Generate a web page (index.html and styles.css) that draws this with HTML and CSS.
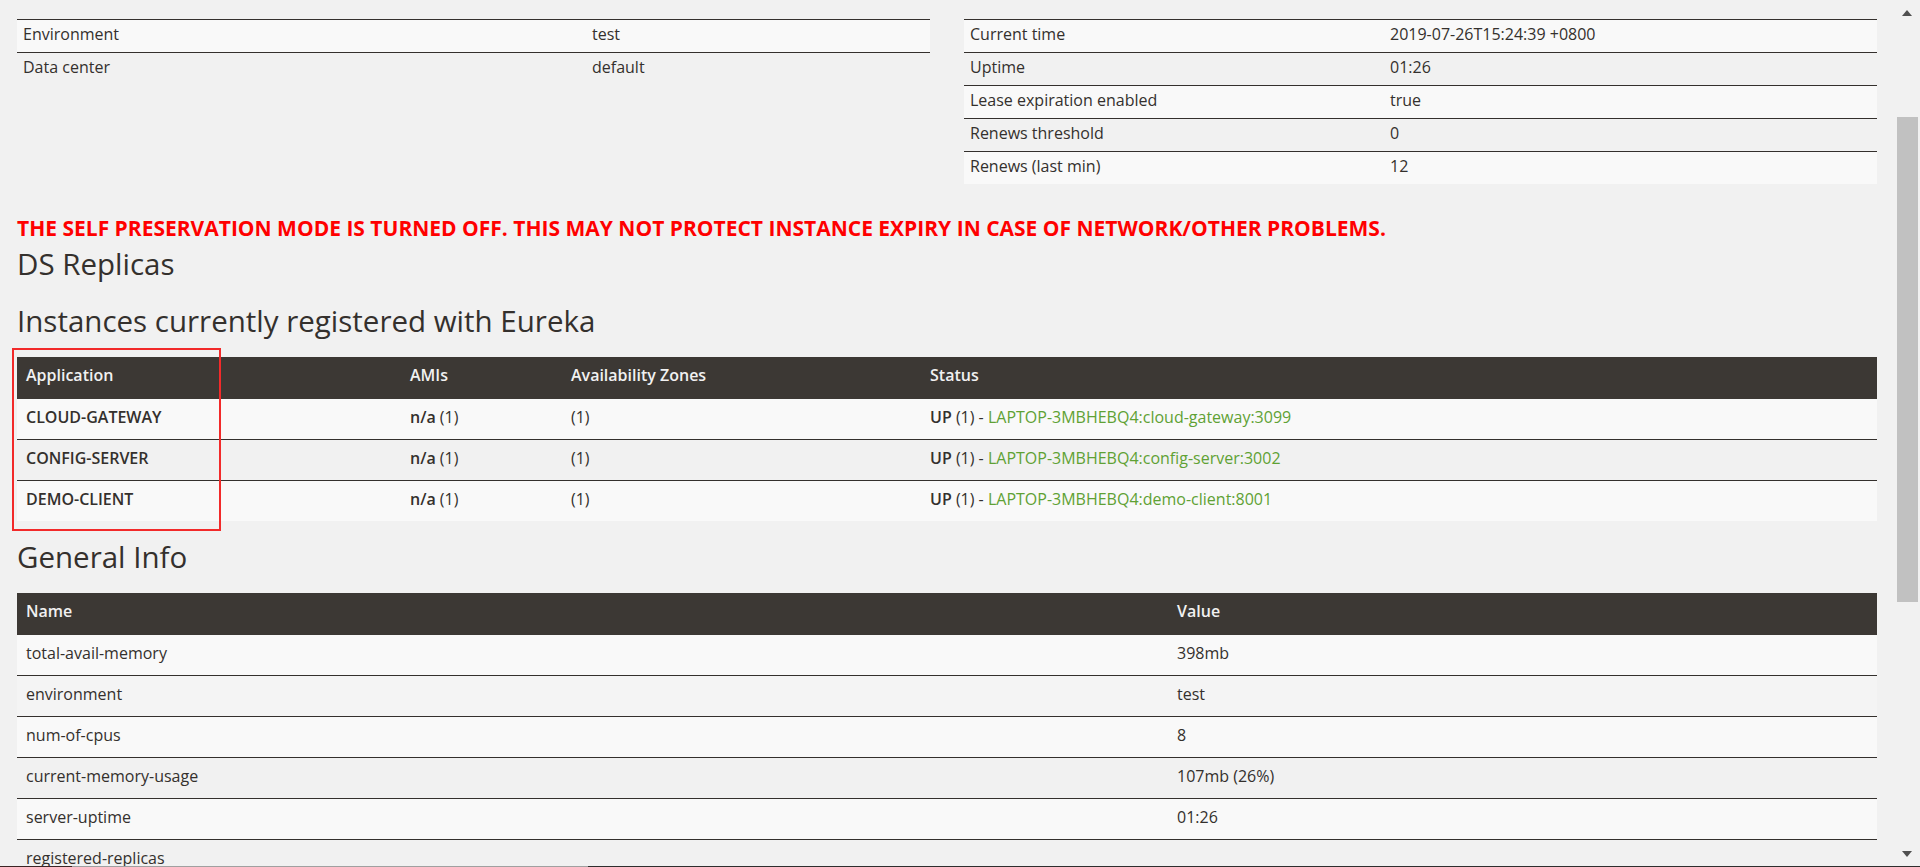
FILE: index.html
```html
<!DOCTYPE html>
<html lang="en">
<head>
<meta charset="utf-8">
<title>Eureka</title>
<link rel="stylesheet" href="styles.css">
</head>
<body>
<div class="page">
  <div class="status-row">
    <table class="kv kv-left">
      <colgroup><col class="kv-left-c1"><col></colgroup>
      <tbody>
        <tr class="odd"><td>Environment</td><td>test</td></tr>
        <tr class="even"><td>Data center</td><td>default</td></tr>
      </tbody>
    </table>
    <table class="kv kv-right">
      <colgroup><col class="kv-right-c1"><col></colgroup>
      <tbody>
        <tr class="odd"><td>Current time</td><td>2019-07-26T15:24:39 +0800</td></tr>
        <tr class="even"><td>Uptime</td><td>01:26</td></tr>
        <tr class="odd"><td>Lease expiration enabled</td><td>true</td></tr>
        <tr class="even"><td>Renews threshold</td><td>0</td></tr>
        <tr class="odd"><td>Renews (last min)</td><td>12</td></tr>
      </tbody>
    </table>
  </div>

  <h4 class="warn">THE SELF PRESERVATION MODE IS TURNED OFF. THIS MAY NOT PROTECT INSTANCE EXPIRY IN CASE OF NETWORK/OTHER PROBLEMS.</h4>
  <h1 class="title t-replicas">DS Replicas</h1>
  <h1 class="title t-instances">Instances currently registered with Eureka</h1>

  <div class="annotated">
    <table class="grid instances">
      <colgroup><col class="i-c1"><col class="i-c2"><col class="i-c3"><col></colgroup>
      <thead>
        <tr><th>Application</th><th>AMIs</th><th>Availability Zones</th><th>Status</th></tr>
      </thead>
      <tbody>
        <tr class="odd"><td><b>CLOUD-GATEWAY</b></td><td><b>n/a</b> (1)</td><td>(1)</td><td><b>UP</b> (1) - <a href="#">LAPTOP-3MBHEBQ4:cloud-gateway:3099</a></td></tr>
        <tr class="even"><td><b>CONFIG-SERVER</b></td><td><b>n/a</b> (1)</td><td>(1)</td><td><b>UP</b> (1) - <a href="#">LAPTOP-3MBHEBQ4:config-server:3002</a></td></tr>
        <tr class="odd"><td><b>DEMO-CLIENT</b></td><td><b>n/a</b> (1)</td><td>(1)</td><td><b>UP</b> (1) - <a href="#">LAPTOP-3MBHEBQ4:demo-client:8001</a></td></tr>
      </tbody>
    </table>
    <div class="highlight"></div>
  </div>

  <h1 class="title t-general">General Info</h1>
  <table class="grid general">
    <colgroup><col class="g-c1"><col></colgroup>
    <thead>
      <tr><th>Name</th><th>Value</th></tr>
    </thead>
    <tbody>
      <tr class="odd"><td>total-avail-memory</td><td>398mb</td></tr>
      <tr class="even hover"><td>environment</td><td>test</td></tr>
      <tr class="odd"><td>num-of-cpus</td><td>8</td></tr>
      <tr class="even"><td>current-memory-usage</td><td>107mb (26%)</td></tr>
      <tr class="odd"><td>server-uptime</td><td>01:26</td></tr>
      <tr class="even"><td>registered-replicas</td><td></td></tr>
    </tbody>
  </table>
</div>

<div class="scrollbar">
  <div class="arrow arrow-up"></div>
  <div class="thumb"></div>
  <div class="arrow arrow-down"></div>
</div>
<div class="taskbar-edge"></div>
</body>
</html>
```

FILE: styles.css
```css
html, body {
  margin: 0;
  padding: 0;
}

body {
  width: 1920px;
  height: 867px;
  overflow: hidden;
  position: relative;
  background: #f1f1f1;
  color: #34302d;
  font-family: "Open Sans", "Noto Sans", sans-serif;
  font-size: 16px;
  line-height: 20px;
}

.page {
  padding: 19px 43px 0 17px;
}

/* ---------- top key/value tables ---------- */
.status-row {
  display: flex;
  gap: 34px;
  align-items: flex-start;
}

table {
  border-collapse: collapse;
  border-spacing: 0;
  table-layout: fixed;
}

.kv {
  width: 913px;
}

.kv-left-c1 { width: 569px; }
.kv-right-c1 { width: 420px; }

.kv td {
  border-top: 1px solid #34302d;
  padding: 4px 6px 8px 6px;
  height: 20px;
  white-space: nowrap;
}

tr.odd { background: #f9f9f9; }
tr.even { background: #f1f1f1; }
tr.even.hover { background: #f4f4f4; }

/* ---------- warning + headings ---------- */
.warn {
  margin: 32px 0 0 0;
  font-size: 21px;
  line-height: 24px;
  font-weight: 700;
  color: #ff0000;
  white-space: nowrap;
}

.title {
  margin: 0;
  font-size: 29.5px;
  line-height: 36px;
  font-weight: 400;
  color: #34302d;
}

.t-replicas { margin-top: 6px; }
.t-instances { margin-top: 21px; }
.t-general { margin-top: 18px; }

/* ---------- dark-header grids ---------- */
.grid {
  width: 1860px;
}

.annotated {
  position: relative;
  margin-top: 18px;
}

.general {
  margin-top: 18px;
}

.grid th {
  background: #3c3834;
  color: #f1f1f1;
  font-weight: 600;
  text-align: left;
  padding: 8px 9px 13px 9px;
  height: 20px;
  white-space: nowrap;
}

.grid td {
  border-top: 1px solid #34302d;
  padding: 8px 9px 12px 9px;
  height: 20px;
  white-space: nowrap;
}

.grid tbody tr:first-child td {
  border-top-color: #3c3834;
}

.i-c1 { width: 384px; }
.i-c2 { width: 161px; }
.i-c3 { width: 359px; }
.g-c1 { width: 1151px; }

.grid b {
  font-weight: 600;
}

.grid a {
  color: #5fa134;
  text-decoration: none;
}

/* annotation box drawn over the Application column */
.highlight {
  position: absolute;
  left: -5px;
  top: -9px;
  width: 205px;
  height: 179px;
  border: 2px solid #f22a2a;
  pointer-events: none;
}

/* ---------- fake scrollbar ---------- */
.scrollbar {
  position: absolute;
  top: 0;
  right: 0;
  width: 23px;
  height: 867px;
  background: #f1f1f1;
}

.thumb {
  position: absolute;
  left: 0;
  top: 117px;
  width: 21px;
  height: 485px;
  background: #c1c1c1;
}

.arrow {
  position: absolute;
  left: 5px;
  width: 0;
  height: 0;
  border-left: 5.5px solid transparent;
  border-right: 5.5px solid transparent;
}

.arrow-up {
  top: 10px;
  border-bottom: 6px solid #505050;
}

.arrow-down {
  top: 851px;
  border-top: 6px solid #505050;
}

.taskbar-edge {
  position: absolute;
  left: 0;
  bottom: 0;
  width: 1920px;
  height: 1px;
  background: linear-gradient(to right, #3a2424 0, #3a2424 72px, #a0a0a0 72px, #a0a0a0 588px, #2e2e2e 588px);
}
```
